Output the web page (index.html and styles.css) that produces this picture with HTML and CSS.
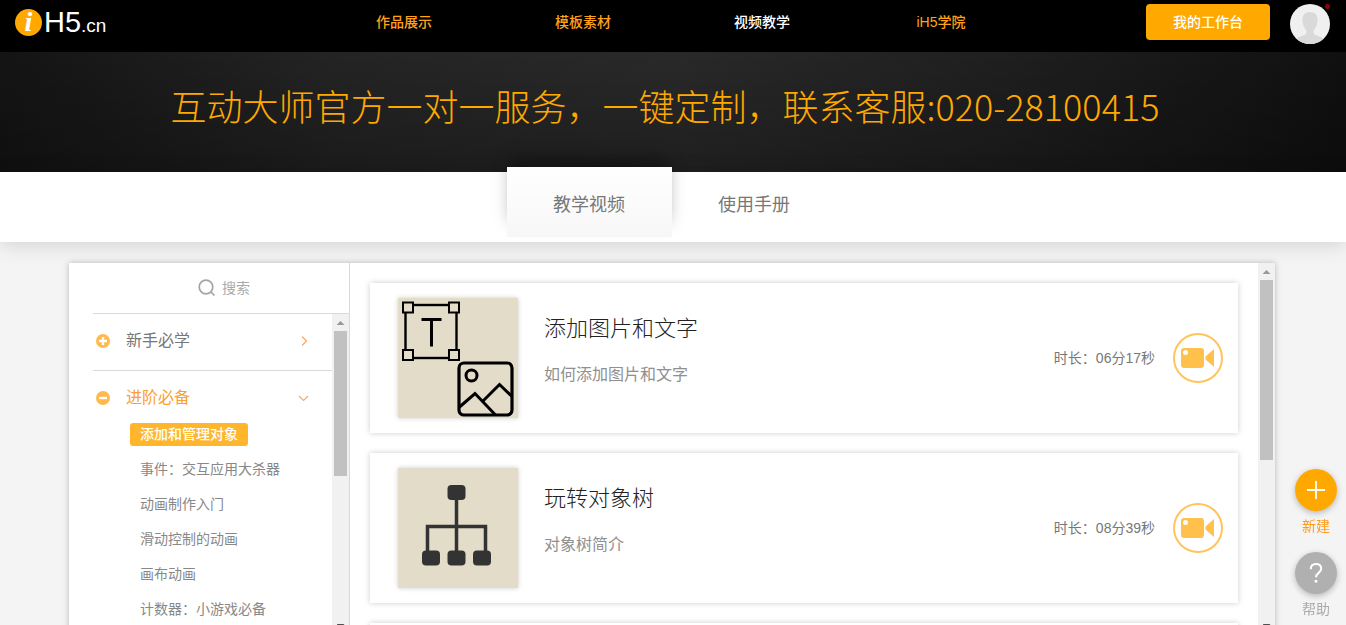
FILE: index.html
```html
<!DOCTYPE html>
<html lang="zh-CN">
<head>
    <meta charset="UTF-8">
    <meta name="viewport" content="width=device-width, initial-scale=1.0">
    <title>视频教学 - iH5.cn</title>
    <link rel="stylesheet" href="styles.css">
</head>
<body>
    <header class="header">
        <a class="logo" href="#"><span class="logo-i">i</span><span class="logo-h5">H5</span><span class="logo-cn">.cn</span></a>
        <nav class="nav">
            <a href="#">作品展示</a>
            <a href="#">模板素材</a>
            <a href="#" class="active">视频教学</a>
            <a href="#">iH5学院</a>
        </nav>
        <div class="user">
            <button type="button" class="workbench">我的工作台</button>
            <a href="#" class="avatar" aria-label="个人中心">
                <svg width="40" height="40" viewBox="0 0 40 40">
                    <defs>
                        <clipPath id="round"><circle cx="20" cy="20" r="20"/></clipPath>
                    </defs>
                    <g clip-path="url(#round)">
                        <rect width="40" height="40" fill="#f0f0f0"/>
                        <path d="M20 8c-5.500 0-8 4-7.500 9 .3 4 2 7.500 4 9.500V29c0 2.500-7 3-10 5.500v6h27v-6c-3-2.500-10-3-10-5.500v-2.500c2-2 3.700-5.500 4-9.500.5-5-2-9-7.500-9z" fill="#d9d9d9"/>
                    </g>
                </svg>
                <span class="dot"></span>
            </a>
        </div>
    </header>

    <div class="banner">互动大师官方一对一服务，一键定制，联系客服:020-28100415</div>

    <div class="tabs">
        <a href="#" class="tab active">教学视频</a>
        <a href="#" class="tab">使用手册</a>
    </div>

    <main class="main">
        <aside class="sidebar">
            <label class="search">
                <svg width="18" height="18" viewBox="0 0 18 18" fill="none" stroke="#a5a5a5" stroke-width="1.700">
                    <circle cx="8" cy="8" r="6.800"/>
                    <path d="M12.800 12.800L16.500 16.500"/>
                </svg>
                <input type="text" placeholder="搜索" aria-label="搜索">
            </label>
            <div class="menu">
                <div class="menu-list">
                    <div class="group">
                        <a href="#" class="group-title">
                            <svg width="14" height="14" viewBox="0 0 14 14">
                                <circle cx="7" cy="7" r="7" fill="#ffb94d"/>
                                <path d="M7 3v8M3 7h8" stroke="#fff" stroke-width="2.400"/>
                            </svg>
                            <span>新手必学</span>
                            <svg width="12" height="12" viewBox="0 0 12 12" fill="none" stroke="#fba963" stroke-width="1.200">
                                <path d="M4 1.500L8.500 6 4 10.500"/>
                            </svg>
                        </a>
                    </div>
                    <div class="group open">
                        <a href="#" class="group-title">
                            <svg width="14" height="14" viewBox="0 0 14 14">
                                <circle cx="7" cy="7" r="7" fill="#ffb94d"/>
                                <path d="M3 7h8" stroke="#fff" stroke-width="2.400"/>
                            </svg>
                            <span>进阶必备</span>
                            <svg width="12" height="12" viewBox="0 0 12 12" fill="none" stroke="#fba963" stroke-width="1.200">
                                <path d="M1 4L5.500 8.500 10 4"/>
                            </svg>
                        </a>
                        <ul class="sub">
                            <li><a href="#" class="active">添加和管理对象</a></li>
                            <li><a href="#">事件：交互应用大杀器</a></li>
                            <li><a href="#">动画制作入门</a></li>
                            <li><a href="#">滑动控制的动画</a></li>
                            <li><a href="#">画布动画</a></li>
                            <li><a href="#">计数器：小游戏必备</a></li>
                        </ul>
                    </div>
                </div>
                <div class="scrollbar">
                    <span class="arrow up"></span>
                    <span class="thumb menu-thumb"></span>
                    <span class="arrow down"></span>
                </div>
            </div>
        </aside>

        <section class="content">
            <div class="videos">
                <article class="card">
                    <svg class="cover" width="120" height="120" viewBox="0 0 120 120" fill="none" stroke="#000">
                        <rect x="7.500" y="7" width="51" height="53" stroke-width="2.400"/>
                        <g fill="#e2dcc8" stroke-width="2">
                            <rect x="5" y="4.500" width="10" height="10"/>
                            <rect x="51" y="4.500" width="10" height="10"/>
                            <rect x="5" y="52" width="10" height="10"/>
                            <rect x="51" y="52" width="10" height="10"/>
                        </g>
                        <path d="M23.500 21.500h20M33.500 21.500v27" stroke-width="3"/>
                        <rect x="61" y="65" width="53" height="52" rx="5" stroke-width="3.200"/>
                        <circle cx="73.500" cy="77.500" r="5.500" stroke-width="3"/>
                        <path d="M61.500 109L77 95.500 97.500 117M84.500 103.500L101.500 86.500 114 98.500" stroke-width="3"/>
                    </svg>
                    <div class="info">
                        <h2>添加图片和文字</h2>
                        <p>如何添加图片和文字</p>
                    </div>
                    <span class="time">时长：06分17秒</span>
                    <button type="button" class="play" aria-label="播放">
                        <svg width="34" height="20" viewBox="0 0 34 20" fill="#ffc04c">
                            <rect width="23" height="20" rx="3"/>
                            <path d="M24.500 8.500L33 1v18l-8.500-7.500z"/>
                            <circle cx="4.500" cy="4.500" r="2.500" fill="#fff"/>
                        </svg>
                    </button>
                </article>
                <article class="card">
                    <svg class="cover" width="120" height="120" viewBox="0 0 120 120" fill="#333">
                        <rect x="49.500" y="17" width="18" height="15" rx="4"/>
                        <path d="M58.500 30v55M29.500 85V58.500h58V85" fill="none" stroke="#333" stroke-width="3.500"/>
                        <rect x="24" y="82.500" width="18" height="15" rx="4"/>
                        <rect x="49.500" y="82.500" width="18" height="15" rx="4"/>
                        <rect x="75" y="82.500" width="18" height="15" rx="4"/>
                    </svg>
                    <div class="info">
                        <h2>玩转对象树</h2>
                        <p>对象树简介</p>
                    </div>
                    <span class="time">时长：08分39秒</span>
                    <button type="button" class="play" aria-label="播放">
                        <svg width="34" height="20" viewBox="0 0 34 20" fill="#ffc04c">
                            <rect width="23" height="20" rx="3"/>
                            <path d="M24.500 8.500L33 1v18l-8.500-7.500z"/>
                            <circle cx="4.500" cy="4.500" r="2.500" fill="#fff"/>
                        </svg>
                    </button>
                </article>
                <article class="card"></article>
            </div>
            <div class="scrollbar">
                <span class="arrow up"></span>
                <span class="thumb content-thumb"></span>
                <span class="arrow down"></span>
            </div>
        </section>
    </main>

    <div class="float">
        <a href="#" class="create">
            <span class="circle">
                <svg width="20" height="20" viewBox="0 0 20 20" stroke="#fff" stroke-width="1.800">
                    <path d="M10 1v18M1 10h18"/>
                </svg>
            </span>
            新建
        </a>
        <a href="#" class="help">
            <span class="circle">
                <svg width="20" height="20" viewBox="0 0 20 20" fill="none" stroke="#fff" stroke-width="2">
                    <path d="M4.800 6.200C4.800 2.800 7 1 10 1s5.200 1.800 5.200 4.800c0 4-5.200 4.200-5.200 8.400"/>
                    <path d="M10 17v2.500" stroke-width="2.600"/>
                </svg>
            </span>
            帮助
        </a>
    </div>
</body>
</html>
```

FILE: styles.css
```css
* {
    margin: 0;
    padding: 0;
    box-sizing: border-box;
}

body {
    font-family: "Liberation Sans", "Noto Sans CJK SC", sans-serif;
    font-size: 14px;
    color: #777;
    background-color: #f4f4f4;
    display: flex;
    flex-direction: column;
    height: 100vh;
    overflow: hidden;
}

a {
    color: inherit;
    text-decoration: none;
}

button {
    font-family: inherit;
    border: none;
    cursor: pointer;
}

svg {
    display: block;
    flex-shrink: 0;
}

/* header */
.header {
    flex-shrink: 0;
    display: grid;
    grid-template-columns: 1fr auto 1fr;
    height: 52px;
    padding: 0 16px 0 15px;
    background-color: #000;
}

.logo {
    display: flex;
    align-items: baseline;
    height: 44px;
    line-height: 44px;
    color: #fff;
}

.logo-i {
    align-self: center;
    width: 27px;
    height: 27px;
    margin-right: 2px;
    border-radius: 50%;
    background-color: #ffa800;
    font: italic bold 28px/26px "Liberation Serif", serif;
    text-align: center;
}

.logo-h5 {
    font-size: 29px;
}

.logo-cn {
    font-size: 19px;
}

.nav {
    display: flex;
    line-height: 44px;
    color: #ffa21a;
    font-weight: 500;
}

.nav a {
    width: 179px;
    text-align: center;
}

.nav .active {
    color: #fff;
}

.user {
    display: flex;
    justify-content: flex-end;
    align-items: flex-start;
    gap: 20px;
    padding-top: 4px;
}

.workbench {
    width: 124px;
    height: 36px;
    padding-bottom: 2px;
    border-radius: 4px;
    background-color: #ffa800;
    color: #fff;
    font-size: 14px;
    font-weight: 500;
}

.avatar {
    position: relative;
}

.dot {
    position: absolute;
    top: 0;
    right: 0;
    width: 5px;
    height: 5px;
    border-radius: 50%;
    background-color: #8a0010;
}

/* banner */
.banner {
    flex-shrink: 0;
    height: 120px;
    padding-right: 16px;
    background: linear-gradient(rgba(0, 0, 0, 0), rgba(0, 0, 0, 0.25)), linear-gradient(90deg, #141414, #242424 25%, #292929 50%, #1f1f1f 75%, #101010);
    color: #ffa800;
    font-family: "Noto Sans CJK SC", sans-serif;
    font-size: 36px;
    font-weight: 300;
    line-height: 106px;
    text-align: center;
    white-space: nowrap;
}

/* tabs */
.tabs {
    flex-shrink: 0;
    display: flex;
    justify-content: center;
    height: 70px;
    padding-right: 3px;
    background-color: #fff;
    box-shadow: 0 2px 20px rgba(0, 0, 0, 0.15);
}

.tab {
    width: 165px;
    font-size: 18px;
    line-height: 66px;
    text-align: center;
}

.tab.active {
    height: 70px;
    margin-top: -5px;
    padding-top: 5px;
    background: linear-gradient(#fff, #f7f7f7);
    box-shadow: 0 -12px 16px -4px rgba(0, 0, 0, 0.35);
}

/* main panel */
.main {
    flex: 1;
    display: flex;
    min-height: 0;
    margin: 21px 71px -8px 69px;
    background-color: #fff;
    box-shadow: 0 0 6px rgba(0, 0, 0, 0.25);
}

.sidebar {
    display: flex;
    flex-direction: column;
    width: 281px;
    padding-left: 24px;
    border-right: 1px solid #d9d9d9;
}

.search {
    flex-shrink: 0;
    display: flex;
    align-items: center;
    gap: 6px;
    height: 51px;
    padding-left: 105px;
    border-bottom: 1px solid #d9d9d9;
}

.search input {
    flex: 1;
    min-width: 0;
    border: none;
    outline: none;
    font-family: inherit;
    font-size: 14px;
    color: #777;
}

.search input::placeholder {
    color: #aaa;
}

.menu {
    flex: 1;
    display: flex;
    min-height: 0;
}

.menu-list {
    flex: 1;
    overflow: hidden;
}

.group {
    padding: 1px 0 3px;
    border-bottom: 1px solid #d9d9d9;
}

.group-title {
    display: flex;
    align-items: center;
    gap: 16px;
    padding: 0 22px 0 3px;
    font-size: 16px;
    line-height: 52px;
}

.group-title span {
    flex: 1;
}

.open .group-title {
    color: #f9a132;
}

.sub {
    margin-top: -1px;
    padding-left: 37px;
    list-style: none;
}

.sub li {
    height: 23px;
    margin-bottom: 12px;
}

.sub a {
    display: inline-block;
    padding: 0 10px;
    border-radius: 3px;
    line-height: 23px;
    color: #888;
}

.sub .active {
    background-color: #ffb62d;
    color: #fff;
    font-weight: 500;
}

/* scrollbars */
.scrollbar {
    flex-shrink: 0;
    display: flex;
    flex-direction: column;
    align-items: center;
    width: 17px;
    background-color: #f1f1f1;
}

.arrow {
    width: 8px;
    height: 4px;
}

.arrow.up {
    margin: 7px 0 6px;
    background-color: #999;
    clip-path: polygon(50% 0, 100% 100%, 0 100%);
}

.arrow.down {
    margin: auto 0 5px;
    background-color: #505050;
    clip-path: polygon(0 0, 100% 0, 50% 100%);
}

.thumb {
    width: 13px;
    background-color: #c1c1c1;
}

.menu-thumb {
    height: 145px;
}

.content-thumb {
    height: 180px;
}

/* video list */
.content {
    flex: 1;
    display: flex;
    min-width: 0;
}

.videos {
    flex: 1;
    padding: 20px;
    overflow: hidden;
}

.card {
    display: flex;
    align-items: center;
    height: 150px;
    margin-bottom: 20px;
    padding: 15px 15px 15px 28px;
    box-shadow: 0 0 6px rgba(0, 0, 0, 0.2);
}

.cover {
    background-color: #e2dcc8;
    box-shadow: 0 0 5px rgba(0, 0, 0, 0.2);
}

.info {
    flex: 1;
    align-self: flex-start;
    margin-left: 26px;
    padding-top: 15px;
}

.info h2 {
    margin-bottom: 18px;
    font-size: 22px;
    font-weight: 300;
    line-height: 32px;
    color: #222;
}

.info p {
    font-size: 16px;
    line-height: 24px;
    color: #909090;
}

.time {
    padding-bottom: 2px;
}

.play {
    display: flex;
    align-items: center;
    justify-content: center;
    width: 50px;
    height: 50px;
    margin-left: 18px;
    border: 2px solid #ffc45c;
    border-radius: 50%;
    background-color: #fff;
}

/* floating buttons */
.float {
    position: fixed;
    right: 9px;
    bottom: 6px;
    display: flex;
    flex-direction: column;
    gap: 16px;
}

.float a {
    line-height: 20px;
    text-align: center;
}

.circle {
    display: flex;
    align-items: center;
    justify-content: center;
    width: 42px;
    height: 42px;
    margin-bottom: 5px;
    border-radius: 50%;
    box-shadow: 0 2px 6px rgba(0, 0, 0, 0.25);
}

.create {
    color: #ff9a1a;
}

.create .circle {
    background-color: #ffa800;
}

.help {
    color: #aaa;
}

.help .circle {
    background-color: #b0b0b0;
}
```
